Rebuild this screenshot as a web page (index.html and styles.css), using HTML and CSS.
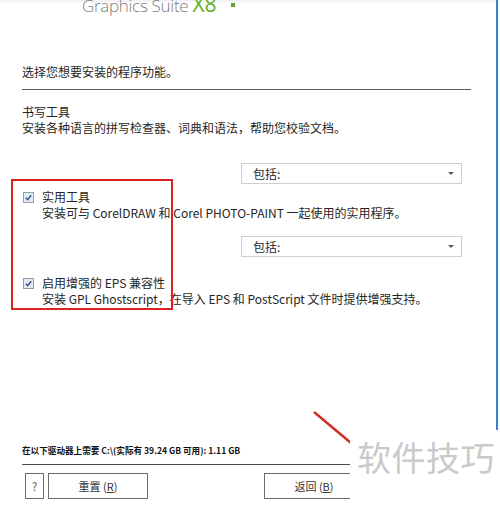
FILE: index.html
```html
<!DOCTYPE html>
<html lang="zh-CN">
<head>
    <meta charset="UTF-8">
    <meta name="viewport" content="width=device-width, initial-scale=1.0">
    <title>CorelDRAW Graphics Suite X8 安装</title>
    <link rel="stylesheet" href="styles.css">
</head>
<body>
    <div class="page">
        <div class="window">
            <div class="header">
                <span class="brand">Graphics Suite <span class="brand-x">X8</span></span>
                <span class="brand-dot"></span>
            </div>

            <div class="content">
                <p class="title">选择您想要安装的程序功能。</p>

                <div class="feature plain">
                    <div class="feature-name">书写工具</div>
                    <div class="feature-desc">安装各种语言的拼写检查器、词典和语法，帮助您校验文档。</div>
                </div>

                <div class="select-row first">
                    <div class="select">包括:<span class="arrow"></span></div>
                </div>

                <div class="feature check-row">
                    <svg class="check" width="11" height="11" viewBox="0 0 11 11">
                        <rect x="0.5" y="0.5" width="10" height="10" fill="#e4ebf3" stroke="#8e9fb3"/>
                        <path d="M2.8 5.6 L4.6 7.6 L8.2 3.2" fill="none" stroke="#2b4f86" stroke-width="1.4"/>
                    </svg>
                    <div>
                        <div class="feature-name">实用工具</div>
                        <div class="feature-desc">安装可与 CorelDRAW 和 Corel PHOTO-PAINT 一起使用的实用程序。</div>
                    </div>
                </div>

                <div class="select-row second">
                    <div class="select">包括:<span class="arrow"></span></div>
                </div>

                <div class="feature check-row last">
                    <svg class="check" width="11" height="11" viewBox="0 0 11 11">
                        <rect x="0.5" y="0.5" width="10" height="10" fill="#e4ebf3" stroke="#8e9fb3"/>
                        <path d="M2.8 5.6 L4.6 7.6 L8.2 3.2" fill="none" stroke="#2b4f86" stroke-width="1.4"/>
                    </svg>
                    <div>
                        <div class="feature-name">启用增强的 EPS 兼容性</div>
                        <div class="feature-desc">安装 GPL Ghostscript，在导入 EPS 和 PostScript 文件时提供增强支持。</div>
                    </div>
                </div>
            </div>

            <div class="footer">
                <div class="disk-info">在以下驱动器上需要 C:\(实际有 39.24 GB 可用): 1.11 GB</div>
                <div class="buttons">
                    <button class="btn help">?</button>
                    <button class="btn reset">重置 (<u>R</u>)</button>
                    <button class="btn back">返回 (<u>B</u>)</button>
                </div>
            </div>
        </div>

        <!-- 标注 -->
        <div class="mark-box"></div>
        <svg class="mark-line" width="40" height="34" viewBox="0 0 40 34">
            <line x1="1" y1="1" x2="38" y2="32" stroke="#d42a22" stroke-width="2.4"/>
        </svg>
        <div class="watermark">软件技巧</div>
    </div>
</body>
</html>
```

FILE: styles.css
```css
body {
    margin: 0;
    background-color: #ffffff;
    font-family: "Noto Sans CJK SC", "Open Sans", sans-serif;
    color: #262626;
}

.page {
    position: relative;
    width: 500px;
    height: 509px;
    overflow: hidden;
}

.window {
    width: 496px;
    height: 509px;
    border-right: 2px solid #3a7fd5;
    display: flex;
    flex-direction: column;
}

.header {
    height: 20px;
    display: flex;
    align-items: flex-start;
    padding-left: 82px;
    background: linear-gradient(#eef1f4, #ffffff 4px);
    overflow: hidden;
}

.brand {
    font-family: "Open Sans", sans-serif;
    font-weight: 300;
    font-size: 17px;
    line-height: 17px;
    margin-top: -4px;
    color: #7d7d7d;
    letter-spacing: -0.3px;
}

.brand-x {
    color: #5fae1e;
    font-size: 21px;
    font-weight: 400;
    letter-spacing: 0;
}

.brand-dot {
    width: 4px;
    height: 4px;
    margin-top: 3px;
    margin-left: 14px;
    background-color: #5fa82a;
}

.content {
    padding: 0 25px 0 22px;
    font-size: 12px;
    line-height: 16px;
}

.title {
    margin: 44px 0 0 0;
    padding-bottom: 9px;
    border-bottom: 1px solid #5a5a5a;
}

.feature.plain {
    margin-top: 14px;
}

.select-row {
    display: flex;
    justify-content: flex-end;
    padding-right: 9px;
}

.select-row.first {
    margin-top: 27px;
}

.select-row.second {
    margin-top: 15px;
}

.select {
    position: relative;
    width: 208px;
    height: 19px;
    line-height: 19px;
    padding-left: 11px;
    border: 1px solid #cfcfcf;
    background-color: #ffffff;
}

.arrow {
    position: absolute;
    right: 7px;
    top: 8px;
    border-left: 3px solid transparent;
    border-right: 3px solid transparent;
    border-top: 3px solid #5a5a5a;
}

.check-row {
    display: flex;
    gap: 8px;
    margin-top: 5px;
    padding-left: 1px;
}

.check-row.last {
    margin-top: 18px;
}

.check {
    margin-top: 3px;
    flex-shrink: 0;
}

.footer {
    margin-top: auto;
    padding: 0 25px 10px 22px;
}

.disk-info {
    font-size: 8.6px;
    font-weight: bold;
    line-height: 12px;
    color: #111111;
    padding-bottom: 8px;
    border-bottom: 1px solid #4a4a4a;
}

.buttons {
    display: flex;
    margin-top: 8px;
    padding-left: 3px;
}

.btn {
    flex-shrink: 0;
    height: 26px;
    padding: 0;
    border: 1px solid #6a6a6a;
    background-color: #ffffff;
    font-family: "Noto Sans CJK SC", sans-serif;
    font-size: 11px;
    color: #333333;
}

.btn.help {
    width: 19px;
    margin-right: 4px;
    color: #555555;
}

.btn.reset {
    width: 100px;
}

.btn.back {
    width: 100px;
    margin-left: 116px;
}

.mark-box {
    position: absolute;
    left: 11px;
    top: 179px;
    width: 158px;
    height: 127px;
    border: 2px solid #d9231e;
}

.mark-line {
    position: absolute;
    left: 313px;
    top: 411px;
}

.watermark {
    position: absolute;
    left: 350px;
    top: 430px;
    right: 0;
    bottom: 0;
    padding: 8px 0 0 7px;
    background-color: #ffffff;
    font-size: 34px;
    line-height: 38px;
    letter-spacing: 0.5px;
    color: #cacaca;
}
```
